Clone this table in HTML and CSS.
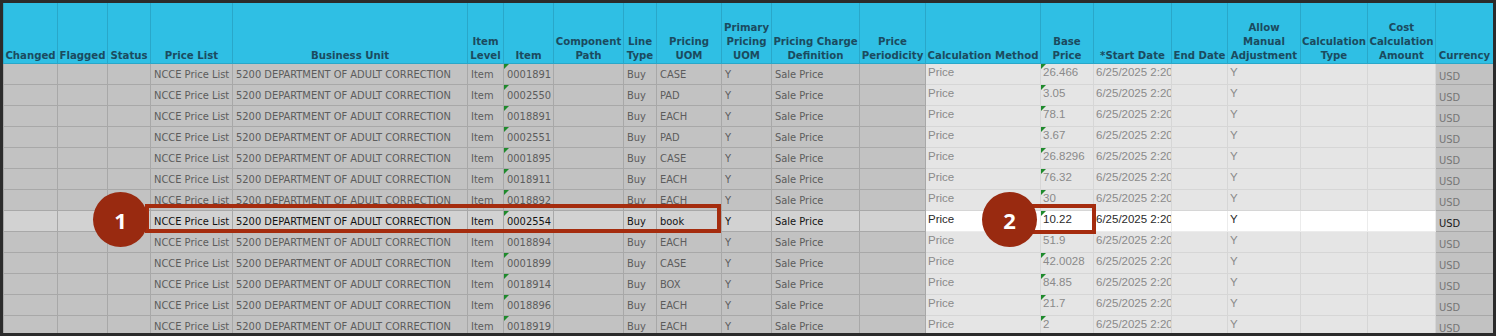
FILE: index.html
```html
<!DOCTYPE html>
<html>
<head>
<meta charset="utf-8">
<link rel="stylesheet" href="styles.css">
</head>
<body>
<div class="frame">
<table class="grid">
<colgroup>
<col style="width:54px"><col style="width:50px"><col style="width:43px"><col style="width:82px"><col style="width:235px"><col style="width:36px"><col style="width:50px"><col style="width:70px"><col style="width:33px"><col style="width:65px"><col style="width:50px"><col style="width:88px"><col style="width:66px"><col style="width:115px"><col style="width:53px"><col style="width:78px"><col style="width:56px"><col style="width:73px"><col style="width:67px"><col style="width:68px"><col style="width:58px">
</colgroup>
<thead>
<tr><th>Changed</th><th>Flagged</th><th>Status</th><th>Price List</th><th>Business Unit</th><th>Item<br>Level</th><th>Item</th><th>Component<br>Path</th><th>Line<br>Type</th><th>Pricing<br>UOM</th><th>Primary<br>Pricing<br>UOM</th><th>Pricing Charge<br>Definition</th><th>Price<br>Periodicity</th><th>Calculation Method</th><th>Base<br>Price</th><th>*Start Date</th><th>End Date</th><th>Allow<br>Manual<br>Adjustment</th><th>Calculation<br>Type</th><th>Cost<br>Calculation<br>Amount</th><th>Currency</th></tr>
</thead>
<tbody>
<tr><td></td><td></td><td></td><td>NCCE Price List</td><td>5200 DEPARTMENT OF ADULT CORRECTION</td><td>Item</td><td class="tri">0001891</td><td></td><td>Buy</td><td>CASE</td><td>Y</td><td>Sale Price</td><td></td><td>Price</td><td class="tri">26.466</td><td>6/25/2025 2:20</td><td></td><td>Y</td><td></td><td></td><td>USD</td></tr>
<tr><td></td><td></td><td></td><td>NCCE Price List</td><td>5200 DEPARTMENT OF ADULT CORRECTION</td><td>Item</td><td class="tri">0002550</td><td></td><td>Buy</td><td>PAD</td><td>Y</td><td>Sale Price</td><td></td><td>Price</td><td class="tri">3.05</td><td>6/25/2025 2:20</td><td></td><td>Y</td><td></td><td></td><td>USD</td></tr>
<tr><td></td><td></td><td></td><td>NCCE Price List</td><td>5200 DEPARTMENT OF ADULT CORRECTION</td><td>Item</td><td class="tri">0018891</td><td></td><td>Buy</td><td>EACH</td><td>Y</td><td>Sale Price</td><td></td><td>Price</td><td class="tri">78.1</td><td>6/25/2025 2:20</td><td></td><td>Y</td><td></td><td></td><td>USD</td></tr>
<tr><td></td><td></td><td></td><td>NCCE Price List</td><td>5200 DEPARTMENT OF ADULT CORRECTION</td><td>Item</td><td class="tri">0002551</td><td></td><td>Buy</td><td>PAD</td><td>Y</td><td>Sale Price</td><td></td><td>Price</td><td class="tri">3.67</td><td>6/25/2025 2:20</td><td></td><td>Y</td><td></td><td></td><td>USD</td></tr>
<tr><td></td><td></td><td></td><td>NCCE Price List</td><td>5200 DEPARTMENT OF ADULT CORRECTION</td><td>Item</td><td class="tri">0001895</td><td></td><td>Buy</td><td>CASE</td><td>Y</td><td>Sale Price</td><td></td><td>Price</td><td class="tri">26.8296</td><td>6/25/2025 2:20</td><td></td><td>Y</td><td></td><td></td><td>USD</td></tr>
<tr><td></td><td></td><td></td><td>NCCE Price List</td><td>5200 DEPARTMENT OF ADULT CORRECTION</td><td>Item</td><td class="tri">0018911</td><td></td><td>Buy</td><td>EACH</td><td>Y</td><td>Sale Price</td><td></td><td>Price</td><td class="tri">76.32</td><td>6/25/2025 2:20</td><td></td><td>Y</td><td></td><td></td><td>USD</td></tr>
<tr><td></td><td></td><td></td><td>NCCE Price List</td><td>5200 DEPARTMENT OF ADULT CORRECTION</td><td>Item</td><td class="tri">0018892</td><td></td><td>Buy</td><td>EACH</td><td>Y</td><td>Sale Price</td><td></td><td>Price</td><td class="tri">30</td><td>6/25/2025 2:20</td><td></td><td>Y</td><td></td><td></td><td>USD</td></tr>
<tr class="sel"><td></td><td></td><td></td><td>NCCE Price List</td><td>5200 DEPARTMENT OF ADULT CORRECTION</td><td>Item</td><td class="tri">0002554</td><td></td><td>Buy</td><td>book</td><td>Y</td><td>Sale Price</td><td></td><td>Price</td><td class="tri">10.22</td><td>6/25/2025 2:20</td><td></td><td>Y</td><td></td><td></td><td>USD</td></tr>
<tr><td></td><td></td><td></td><td>NCCE Price List</td><td>5200 DEPARTMENT OF ADULT CORRECTION</td><td>Item</td><td>0018894</td><td></td><td>Buy</td><td>EACH</td><td>Y</td><td>Sale Price</td><td></td><td>Price</td><td>51.9</td><td>6/25/2025 2:20</td><td></td><td>Y</td><td></td><td></td><td>USD</td></tr>
<tr><td></td><td></td><td></td><td>NCCE Price List</td><td>5200 DEPARTMENT OF ADULT CORRECTION</td><td>Item</td><td class="tri">0001899</td><td></td><td>Buy</td><td>CASE</td><td>Y</td><td>Sale Price</td><td></td><td>Price</td><td class="tri">42.0028</td><td>6/25/2025 2:20</td><td></td><td>Y</td><td></td><td></td><td>USD</td></tr>
<tr><td></td><td></td><td></td><td>NCCE Price List</td><td>5200 DEPARTMENT OF ADULT CORRECTION</td><td>Item</td><td class="tri">0018914</td><td></td><td>Buy</td><td>BOX</td><td>Y</td><td>Sale Price</td><td></td><td>Price</td><td class="tri">84.85</td><td>6/25/2025 2:20</td><td></td><td>Y</td><td></td><td></td><td>USD</td></tr>
<tr><td></td><td></td><td></td><td>NCCE Price List</td><td>5200 DEPARTMENT OF ADULT CORRECTION</td><td>Item</td><td class="tri">0018896</td><td></td><td>Buy</td><td>EACH</td><td>Y</td><td>Sale Price</td><td></td><td>Price</td><td class="tri">21.7</td><td>6/25/2025 2:20</td><td></td><td>Y</td><td></td><td></td><td>USD</td></tr>
<tr><td></td><td></td><td></td><td>NCCE Price List</td><td>5200 DEPARTMENT OF ADULT CORRECTION</td><td>Item</td><td class="tri">0018919</td><td></td><td>Buy</td><td>EACH</td><td>Y</td><td>Sale Price</td><td></td><td>Price</td><td class="tri">2</td><td>6/25/2025 2:20</td><td></td><td>Y</td><td></td><td></td><td>USD</td></tr>
</tbody>
</table>
<div class="callout-box box-1"></div>
<div class="callout-box box-2"></div>
<div class="badge badge-1">1</div>
<div class="badge badge-2">2</div>
</div>
</body>
</html>
```

FILE: styles.css
```css
body {
  margin: 0;
  background: #ffffff;
}

.frame {
  position: relative;
  width: 1496px;
  height: 336px;
  box-sizing: border-box;
  border: 3px solid #2b2b2b;
  overflow: hidden;
  background: #e5e5e5;
}

.grid {
  border-collapse: collapse;
  table-layout: fixed;
  width: 1490px;
}

.grid th {
  height: 60px;
  padding: 0 1px 0;
  background: #2fbfe4;
  color: #1b4b5f;
  font-family: "DejaVu Sans Condensed", "DejaVu Sans", sans-serif;
  font-weight: bold;
  font-size: 11.3px;
  line-height: 14px;
  text-align: center;
  vertical-align: bottom;
  white-space: nowrap;
  border-left: 1px solid #29a7c9;
  border-right: 1px solid #29a7c9;
  border-bottom: 1px solid #29a7c9;
}

.grid td {
  height: 20px;
  padding: 0 3px;
  white-space: nowrap;
  overflow: hidden;
  position: relative;
  font-family: "DejaVu Sans Condensed", "DejaVu Sans", sans-serif;
  font-size: 11px;
  background: #c2c2c2;
  color: #5c5c5c;
  border: 1px solid #a8a8a8;
}

.grid td:nth-child(n+14):nth-child(-n+20) {
  background: #e5e5e5;
  color: #8a8a8a;
  border: 1px solid #d6d6d6;
  font-family: "Liberation Sans", Arial, sans-serif;
  font-size: 11.5px;
  vertical-align: top;
  padding: 2px 2px 0;
  height: 18px;
}

.grid td:nth-child(21) {
  color: #767676;
  vertical-align: bottom;
  padding-bottom: 1px;
  height: 19px;
}

.grid tr.sel td {
  background: #d2d2d2;
  color: #141414;
}

.grid tr.sel td:nth-child(n+14):nth-child(-n+20) {
  background: #ffffff;
  color: #2a2a2a;
  border-color: #ececec;
}

.grid tr.sel td:nth-child(21) {
  background: #c6c6c6;
  color: #1a1a1a;
}

.grid td.tri::before {
  content: "";
  position: absolute;
  left: 0;
  top: 0;
  border-top: 5px solid #1e8a2c;
  border-right: 5px solid transparent;
}

.callout-box {
  position: absolute;
  box-sizing: border-box;
  border: 4px solid #a52c0e;
}

.box-1 {
  left: 142px;
  top: 201px;
  width: 576px;
  height: 29px;
}

.box-2 {
  left: 1027px;
  top: 201px;
  width: 66px;
  height: 30px;
}

.badge {
  position: absolute;
  width: 55px;
  height: 55px;
  border-radius: 50%;
  background: #992a10;
  color: #ffffff;
  font-family: "Open Sans", "DejaVu Sans", sans-serif;
  font-weight: bold;
  font-size: 22px;
  display: flex;
  align-items: center;
  justify-content: center;
}

.badge-1 {
  left: 90px;
  top: 189px;
}

.badge-2 {
  left: 979px;
  top: 189px;
}
```
